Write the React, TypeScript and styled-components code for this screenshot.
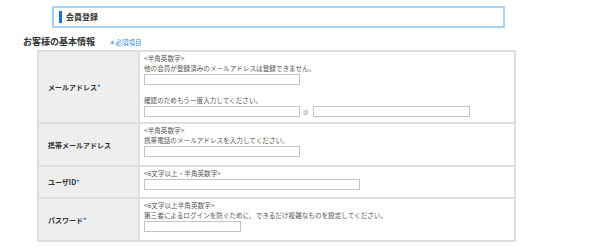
import React from 'react';
import styled, { createGlobalStyle } from 'styled-components';

const GlobalStyle = createGlobalStyle`
  html, body {
    margin:0;
    padding:0;
    background:#fff;
  }
  body {
    width:600px;
    height:250px;
    overflow:hidden;
    font-family:"Noto Sans CJK JP", "Noto Sans", sans-serif;
    color:#444;
  }
`;

const Page = styled.div`
  padding-top:6px;
`;

const TitleBox = styled.div`
  margin-left:52px;
  width:444px;
  height:18px;
  border:2px solid #a9d3f5;
  display:flex;
  align-items:center;
  padding-left:5px;
  box-sizing:content-box;
  > i{
    display:block;
    width:3px;
    height:12px;
    background:#1a73d0;
    margin-right:4px;
  }
  > h1{
    margin:0;
    font-size:8px;
    line-height:10px;
    font-weight:bold;
    color:#333;
  }
`;

const SectionHead = styled.div`
  display:flex;
  align-items:center;
  margin:6px 0 0 23px;
  height:16px;
  > h2{
    margin:0;
    font-size:9px;
    font-weight:bold;
    color:#333;
    line-height:16px;
  }
  > span{
    margin-left:14px;
    font-size:6.5px;
    color:#2b8ad8;
  }
`;

const FormTable = styled.table`
  margin-left:37px;
  width:479px;
  border-collapse:collapse;
  border:2px solid #dedede;
  td{
    border:2px solid #dedede;
    padding:0;
  }
`;

const Label = styled.td`
  width:90px;
  background:#eeeeee;
  padding-left:9px !important;
  vertical-align:middle;
  font-size:7px;
  font-weight:bold;
  color:#333;
  > em{
    font-style:normal;
    color:#2b8ad8;
  }
`;

const Field = styled.td<{ $h: number }>`
  height:${p => p.$h}px;
  vertical-align:top;
  padding:1px 4px 0 !important;
  font-size:6.6px;
  line-height:10px;
  color:#555;
  box-sizing:border-box;
`;

const Note = styled.div<{ $gap?: number }>`
  margin-top:${p => p.$gap || 0}px;
  white-space:nowrap;
`;

const InputRow = styled.div`
  display:flex;
  align-items:center;
  margin-top:1px;
  > span{
    margin:0 4px 0 3px;
    font-size:6px;
    color:#888;
  }
`;

const TextBox = styled.input<{ $w: number }>`
  width:${p => p.$w}px;
  height:11px;
  box-sizing:border-box;
  border:1px solid #c4c4c4;
  padding:0;
  margin:0;
  background:#fff;
  outline:none;
`;

function App() {
  return (
    <Page>
      <GlobalStyle />
      <TitleBox>
        <i />
        <h1>会員登録</h1>
      </TitleBox>

      <SectionHead>
        <h2>お客様の基本情報</h2>
        <span>＊必須項目</span>
      </SectionHead>

      <FormTable>
        <tbody>
          <tr>
            <Label>メールアドレス<em>*</em></Label>
            <Field $h={72}>
              <Note>&lt;半角英数字&gt;</Note>
              <Note>他の会員が登録済みのメールアドレスは登録できません。</Note>
              <InputRow><TextBox $w={156} /></InputRow>
              <Note $gap={10}>確認のためもう一度入力してください。</Note>
              <InputRow>
                <TextBox $w={156} />
                <span>@</span>
                <TextBox $w={157} />
              </InputRow>
            </Field>
          </tr>
          <tr>
            <Label>携帯メールアドレス</Label>
            <Field $h={43}>
              <Note>&lt;半角英数字&gt;</Note>
              <Note>携帯電話のメールアドレスを入力してください。</Note>
              <InputRow><TextBox $w={156} /></InputRow>
            </Field>
          </tr>
          <tr>
            <Label>ユーザID<em>*</em></Label>
            <Field $h={32}>
              <Note>&lt;6文字以上・半角英数字&gt;</Note>
              <InputRow><TextBox $w={216} /></InputRow>
            </Field>
          </tr>
          <tr>
            <Label>パスワード<em>*</em></Label>
            <Field $h={43}>
              <Note>&lt;6文字以上半角英数字&gt;</Note>
              <Note>第三者によるログインを防ぐために、できるだけ複雑なものを設定してください。</Note>
              <InputRow><TextBox $w={97} /></InputRow>
            </Field>
          </tr>
        </tbody>
      </FormTable>
    </Page>
  );
}

export default App;
